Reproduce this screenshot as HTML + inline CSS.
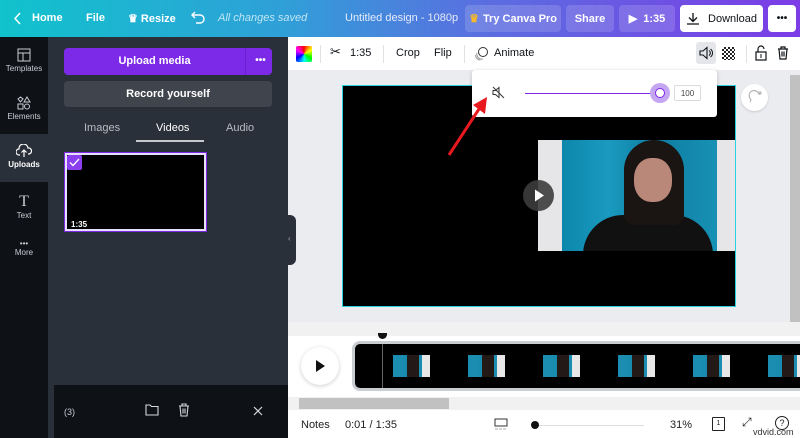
<!DOCTYPE html>
<html><head><meta charset="utf-8"><style>
*{margin:0;padding:0;box-sizing:border-box}
body{width:800px;height:438px;overflow:hidden;font-family:"Liberation Sans",sans-serif;font-size:11px;position:relative;background:#ebecf0}
.a{position:absolute}
.top{left:0;top:0;width:800px;height:37px;background:linear-gradient(90deg,#10c3cc 0%,#2fa0d8 35%,#5a6fe0 60%,#7c3ce6 100%);color:#fff}
.top span{position:absolute;top:12px;font-size:11px;font-weight:bold}
.btn{position:absolute;top:5px;height:27px;border-radius:4px;background:rgba(255,255,255,.15);color:#fff;font-weight:bold;font-size:11px;display:flex;align-items:center;justify-content:center}
.side{left:0;top:37px;width:48px;height:401px;background:#0e1217}
.si{position:absolute;left:0;width:48px;text-align:center;color:#c9ccd1;font-size:8px}
.panel{left:48px;top:37px;width:240px;height:401px;background:#293039}
.tb{left:288px;top:37px;width:512px;height:33px;background:#fff;color:#0e1318;font-size:11px}
.tb span{position:absolute;top:10px}
.sep{position:absolute;top:8px;width:1px;height:18px;background:#dfe1e5}
.th{position:absolute;top:355px;width:37px;height:22px;background:linear-gradient(90deg,#1a8db0 0,#1a8db0 8px,#178aad 14px,#231a18 14px,#231a18 26px,#1a8db0 26px,#1a8db0 29px,#e8e8e8 29px)}
</style></head><body>
<div class="a top">
 <svg class="a" style="left:14px;top:12px" width="8" height="13"><path d="M6 1L1 6.5L6 12" stroke="#fff" stroke-width="1.5" fill="none"/></svg>
 <span style="left:32px">Home</span><span style="left:86px">File</span>
 <span style="left:128px">♛ Resize</span>
 <svg class="a" style="left:191px;top:11px" width="14" height="13"><path d="M4 1L1 4L4 7M1 4H9a4 4 0 010 8H5" stroke="#fff" stroke-width="1.4" fill="none"/></svg>
 <span style="left:218px;font-weight:normal;font-style:italic;color:#bfe6f4">All changes saved</span>
 <span style="left:345px;font-weight:normal;color:#e6ecfb">Untitled design - 1080p</span>
 <div class="btn" style="left:465px;width:96px"><span style="position:static;color:#f7b92a;margin-right:4px">♛</span>Try Canva Pro</div>
 <div class="btn" style="left:566px;width:48px">Share</div>
 <div class="btn" style="left:619px;width:56px">▶&nbsp;&nbsp;1:35</div>
 <div class="btn" style="left:680px;width:83px;background:#fff;color:#0e1318;font-weight:normal">
  <svg width="14" height="13" style="margin-right:8px"><path d="M7 1V9M3 5.5L7 9.5L11 5.5M1 12H13" stroke="#0e1318" stroke-width="1.3" fill="none"/></svg>Download</div>
 <div class="btn" style="left:768px;width:28px;background:#fff;color:#0e1318;font-size:10px">•••</div>
</div>
<div class="a side">
 <div class="si" style="top:0;height:49px;padding-top:11px"><svg width="14" height="14"><rect x="1" y="1" width="12" height="12" fill="none" stroke="#c9ccd1"/><path d="M1 5H13M6 5V13" stroke="#c9ccd1"/></svg><br>Templates</div>
 <div class="si" style="top:49px;height:48px;padding-top:10px"><svg width="14" height="14"><path d="M1 3L3.5 1 6 3 3.5 6zM10 1L13 6H7z" fill="none" stroke="#c9ccd1"/><rect x="1" y="8" width="5" height="5" fill="none" stroke="#c9ccd1"/><circle cx="10" cy="10.5" r="2.5" fill="none" stroke="#c9ccd1"/></svg><br>Elements</div>
 <div class="si" style="top:97px;height:48px;background:#293039;color:#fff;font-weight:bold;padding-top:10px"><svg width="16" height="14"><path d="M4 11H3a3 3 0 010-6 4.5 4.5 0 019-1 3 3 0 011 6H12M8 13V6M5.5 8.5L8 6 10.5 8.5" fill="none" stroke="#fff" stroke-width="1.2"/></svg><br>Uploads</div>
 <div class="si" style="top:150px;padding-top:6px"><span style="font-family:'Liberation Serif';font-size:16px">T</span><br>Text</div>
 <div class="si" style="top:198px;padding-top:4px"><span style="font-size:8px">•••</span><br>More</div>
</div>
<div class="a panel">
 <div class="a" style="left:16px;top:11px;width:208px;height:27px;background:#7d2ae8;border-radius:4px;color:#fff;font-weight:bold;font-size:11px">
  <div class="a" style="left:0;width:181px;top:7px;text-align:center">Upload media</div>
  <div class="a" style="left:181px;top:0;width:1px;height:27px;background:#6a1fd0"></div>
  <div class="a" style="left:185px;top:7px;width:23px;text-align:center;font-size:10px">•••</div></div>
 <div class="a" style="left:16px;top:44px;width:208px;height:26px;background:#3f444d;border-radius:4px;color:#fff;font-weight:bold;text-align:center;padding-top:7px">Record yourself</div>
 <div class="a" style="left:36px;top:85px;color:#b8bcc3">Images</div>
 <div class="a" style="left:108px;top:85px;color:#fff">Videos</div>
 <div class="a" style="left:178px;top:85px;color:#b8bcc3">Audio</div>
 <div class="a" style="left:88px;top:103px;width:68px;height:2px;background:#c5c8cd"></div>
 <div class="a" style="left:17px;top:116px;width:141px;height:78px;background:#000;border:2px solid #e8e0f8;outline:1px solid #7d2ae8"></div>
 <div class="a" style="left:19px;top:118px;width:15px;height:15px;background:#8b3ff0;border-radius:2px"><svg width="15" height="15"><path d="M3 7.5L6 10.5 12 4" stroke="#fff" stroke-width="1.3" fill="none"/></svg></div>
 <div class="a" style="left:23px;top:183px;color:#fff;font-size:8px;font-weight:bold">1:35</div>
 <div class="a" style="left:6px;top:348px;width:234px;height:53px;background:#0e1217"></div>
 <div class="a" style="left:16px;top:370px;color:#c9ccd1;font-size:9px">(3)</div>
 <svg class="a" style="left:97px;top:367px" width="14" height="12"><path d="M1 1H5L6.5 2.5H13V11H1Z" fill="none" stroke="#d6d8dc" stroke-width="1.1"/></svg>
 <svg class="a" style="left:130px;top:366px" width="12" height="14"><path d="M1 3H11M4 3V1H8V3M2 3L3 13H9L10 3M5 5.5V10.5M7 5.5V10.5" fill="none" stroke="#d6d8dc" stroke-width="1.1"/></svg>
 <svg class="a" style="left:205px;top:369px" width="10" height="10"><path d="M1 1L9 9M9 1L1 9" stroke="#d6d8dc" stroke-width="1.2"/></svg>
</div>
<div class="a" style="left:288px;top:215px;width:8px;height:50px;background:#293039;border-radius:0 6px 6px 0;color:#aaa;font-size:8px;padding-top:19px">‹</div>
<div class="a tb">
 <div class="a" style="left:8px;top:9px;width:16px;height:16px;border-radius:2px;background:conic-gradient(red,yellow,lime,cyan,blue,magenta,red)"></div>
 <div class="sep" style="left:32px"></div>
 <span style="left:42px;font-size:13px;top:7px">✂</span><span style="left:62px">1:35</span>
 <div class="sep" style="left:95px"></div>
 <span style="left:108px">Crop</span><span style="left:146px">Flip</span>
 <div class="sep" style="left:176px"></div>
 <svg class="a" style="left:186px;top:9px" width="15" height="15"><circle cx="9" cy="6" r="4.5" fill="none" stroke="#333"/><path d="M3 7a5 5 0 006 6M1.5 9a5 5 0 005 5" fill="none" stroke="#999"/></svg>
 <span style="left:206px">Animate</span>
 <div class="a" style="left:408px;top:5px;width:20px;height:22px;background:#e4e6ea;border-radius:3px"></div>
 <svg class="a" style="left:411px;top:9px" width="15" height="14"><path d="M1 5H4L8 1.5V12.5L4 9H1Z" fill="none" stroke="#0e1318" stroke-width="1.1"/><path d="M10 4.5a3 3 0 010 5M11.5 3a5 5 0 010 8" fill="none" stroke="#0e1318"/></svg>
 <div class="a" style="left:434px;top:10px;width:13px;height:13px;background:repeating-conic-gradient(#222 0 25%,#fff 0 50%) 0 0/4px 4px"></div>
 <div class="sep" style="left:458px"></div>
 <svg class="a" style="left:467px;top:8px" width="12" height="16"><path d="M3 7V4a3 3 0 016 0" fill="none" stroke="#0e1318" stroke-width="1.2"/><rect x="1" y="7" width="10" height="8" fill="none" stroke="#0e1318" stroke-width="1.2"/><path d="M6 9V13" stroke="#0e1318"/></svg>
 <svg class="a" style="left:489px;top:9px" width="12" height="14"><path d="M1 3H11M4 3V1H8V3M2 3L3 13H9L10 3M5 5.5V10.5M7 5.5V10.5" fill="none" stroke="#0e1318" stroke-width="1.2"/></svg>
</div>
<div class="a" style="left:342px;top:85px;width:394px;height:222px;background:#000;border:1px solid #2ad0dc"></div>
<div class="a" style="left:538px;top:140px;width:197px;height:111px;background:#e6e6e9;overflow:hidden">
 <div class="a" style="left:24px;top:0;width:155px;height:111px;background:linear-gradient(90deg,#0d86ab,#1a9ac0 30%,#0e7da0 60%,#1791b5)"></div>
 <div class="a" style="left:45px;top:75px;width:130px;height:60px;background:#111;border-radius:40px 40px 0 0"></div>
 <div class="a" style="left:86px;top:0;width:60px;height:85px;background:#1a1412;border-radius:30px 30px 10px 10px"></div>
 <div class="a" style="left:96px;top:18px;width:38px;height:44px;background:#b98878;border-radius:45%"></div>
</div>
<div class="a" style="left:523px;top:180px;width:31px;height:31px;border-radius:50%;background:rgba(60,60,60,.9)"><svg width="31" height="31"><path d="M12 9.5L21 15.5 12 21.5Z" fill="#fff"/></svg></div>
<div class="a" style="left:472px;top:70px;width:245px;height:47px;background:#fff;border-radius:3px;box-shadow:0 1px 4px rgba(0,0,0,.2)">
 <svg class="a" style="left:20px;top:16px" width="13" height="13"><path d="M1 4.5H3.5L7 1.5V11.5L3.5 8.5H1Z" fill="none" stroke="#333" stroke-width="1"/><path d="M1 1L12 12" stroke="#333"/></svg>
 <div class="a" style="left:53px;top:23px;width:135px;height:1px;background:#7d2ae8"></div>
 <div class="a" style="left:178px;top:13px;width:20px;height:20px;border-radius:50%;background:#c5a6f3"></div>
 <div class="a" style="left:183px;top:18px;width:10px;height:10px;border-radius:50%;background:#fff;border:1px solid #7d2ae8"></div>
 <div class="a" style="left:202px;top:15px;width:27px;height:16px;border:1px solid #d9dbe0;border-radius:2px;font-size:8px;color:#444;text-align:center;padding-top:3px">100</div>
</div>
<div class="a" style="left:741px;top:84px;width:27px;height:27px;border-radius:50%;background:#fff;box-shadow:0 1px 2px rgba(0,0,0,.15)"><svg width="27" height="27"><path d="M9 18L10 15.5a5 5 0 118 -5" fill="none" stroke="#aaa"/><path d="M17 9H21M19 7V11" stroke="#aaa"/></svg></div>
<svg class="a" style="left:445px;top:95px" width="45" height="65"><path d="M4 60L34 14" stroke="#e8191e" stroke-width="3"/><path d="M28 10L42 2L40 19Z" fill="#e8191e"/></svg>
<div class="a" style="left:790px;top:75px;width:10px;height:250px;background:#c1c1c1"></div>
<div class="a" style="left:288px;top:322px;width:512px;height:14px;background:#f1f1f1"></div>
<div class="a" style="left:288px;top:336px;width:512px;height:61px;background:#fff"></div>
<div class="a" style="left:378px;top:333px;width:9px;height:6px;background:#111;border-radius:0 0 5px 5px"></div>
<div class="a" style="left:301px;top:347px;width:38px;height:38px;border-radius:50%;background:#fff;box-shadow:0 1px 4px rgba(0,0,0,.2)"><svg width="38" height="38"><path d="M15 13L24 19 15 25Z" fill="#111"/></svg></div>
<div class="a" style="left:352px;top:341px;width:460px;height:50px;border:3px solid #c9ccd1;border-radius:8px;background:#000"></div>
<div class="a" style="left:382px;top:344px;width:1px;height:44px;background:#666"></div>
<div class="th" style="left:393px"></div><div class="th" style="left:468px"></div><div class="th" style="left:543px"></div><div class="th" style="left:618px"></div><div class="th" style="left:693px"></div><div class="th" style="left:768px"></div>
<div class="a" style="left:288px;top:397px;width:512px;height:13px;background:#f1f1f1"></div>
<div class="a" style="left:299px;top:398px;width:150px;height:11px;background:#c1c1c1"></div>
<div class="a" style="left:288px;top:410px;width:512px;height:28px;background:#fff;color:#222">
 <div class="a" style="left:13px;top:9px">Notes</div><div class="a" style="left:57px;top:9px">0:01 / 1:35</div>
 <svg class="a" style="left:206px;top:8px" width="14" height="13"><rect x="1" y="1" width="12" height="7" fill="none" stroke="#333"/><path d="M1 11H13" stroke="#aaa" stroke-dasharray="3 1"/></svg>
 <div class="a" style="left:248px;top:15px;width:108px;height:1px;background:#ddd"></div>
 <div class="a" style="left:243px;top:11px;width:8px;height:8px;border-radius:50%;background:#111"></div>
 <div class="a" style="left:382px;top:9px">31%</div>
 <div class="a" style="left:424px;top:7px;width:13px;height:14px;border:1px solid #222;border-radius:1px;font-size:7px;text-align:center;padding-top:2px">1</div>
 <div class="a" style="left:454px;top:5px;font-size:12px">⤢</div>
 <div class="a" style="left:487px;top:6px;width:14px;height:14px;border:1px solid #222;border-radius:50%;font-size:9px;text-align:center;padding-top:1px">?</div>
 <div class="a" style="left:465px;top:17px;font-size:9px;color:#333">vdvid.com</div>
</div>
</body></html>
